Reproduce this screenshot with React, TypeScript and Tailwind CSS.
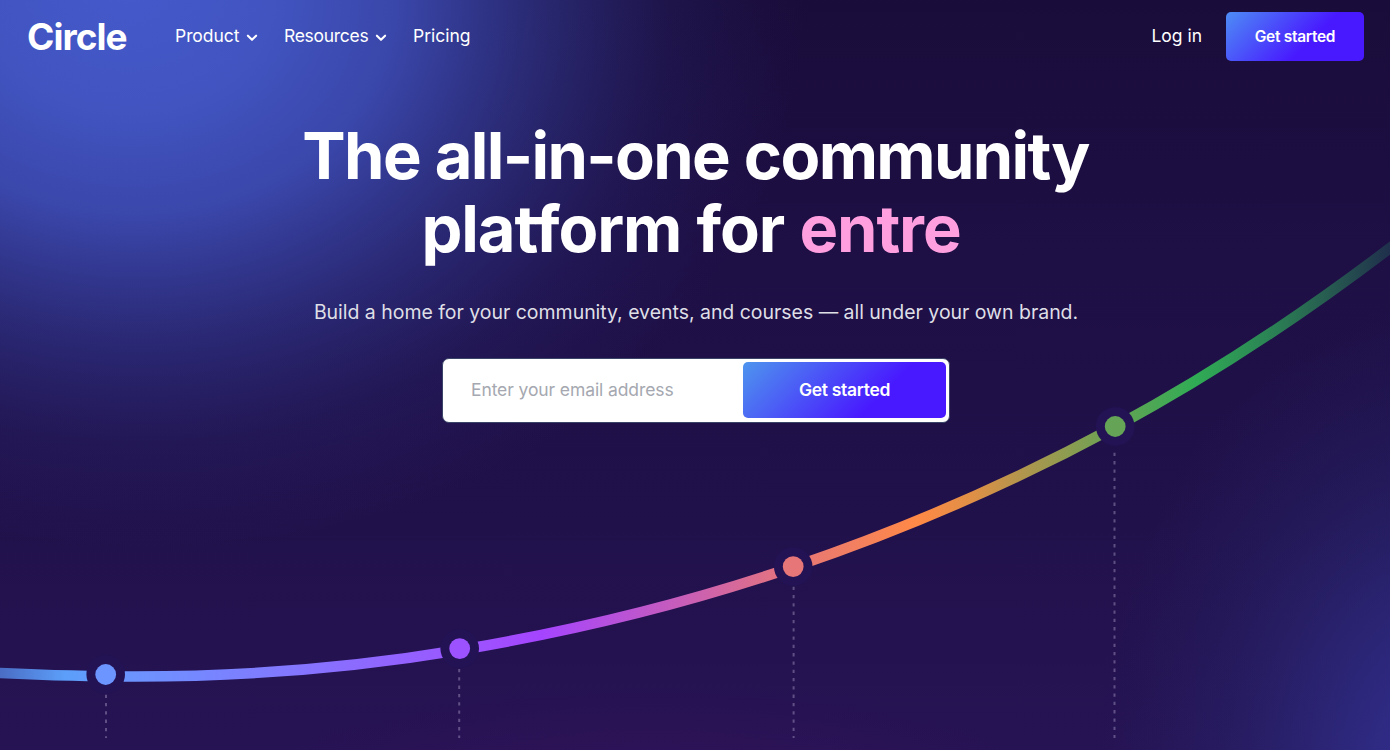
interface Milestone {
  x: number;
  y: number;
  color: string;
  lineX: number;
  lineTop: number;
}

const MILESTONES: Milestone[] = [
  { x: 105.7, y: 674.5, color: "#6c95ff", lineX: 106, lineTop: 694.7 },
  { x: 459.7, y: 648.6, color: "#9c53ff", lineX: 459.2, lineTop: 669 },
  { x: 793.2, y: 566.6, color: "#e77678", lineX: 793.6, lineTop: 586.7 },
  { x: 1115.2, y: 426.5, color: "#65a357", lineX: 1114.5, lineTop: 452.8 },
];

const CURVE =
  "M-10 672.4L0 673C45 675.1 90 676.5 135 676.5C243.3 676.5 351.7 668.1 460 650C571.2 631.4 682.3 604.8 793.5 567C900.7 530.6 1007.8 484.9 1115 427C1206.7 377.5 1298.3 317.7 1390 248L1400 240.4";

function Backdrop() {
  return (
    <svg
      viewBox="0 0 1390 750"
      className="col-start-1 row-start-1 h-[750px] w-[1390px]"
      fill="none"
      aria-hidden="true"
    >
      <defs>
        <linearGradient id="base" x1="0" y1="0" x2="0" y2="1">
          <stop offset="0" stopColor="#1a0c3a" />
          <stop offset="0.35" stopColor="#1e0f45" />
          <stop offset="0.7" stopColor="#21114b" />
          <stop offset="1" stopColor="#261354" />
        </linearGradient>
        <radialGradient id="blue" gradientUnits="userSpaceOnUse" cx="0" cy="0" r="1" gradientTransform="translate(125 -10) rotate(5) scale(680 560)">
          <stop offset="0" stopColor="#4559cb" />
          <stop offset="0.22" stopColor="#4256c4" stopOpacity="0.97" />
          <stop offset="0.4" stopColor="#4052bf" stopOpacity="0.84" />
          <stop offset="0.6" stopColor="#3b4bb4" stopOpacity="0.47" />
          <stop offset="0.8" stopColor="#3340a0" stopOpacity="0.16" />
          <stop offset="1" stopColor="#2c3590" stopOpacity="0" />
        </radialGradient>
        <radialGradient id="corner" gradientUnits="userSpaceOnUse" cx="0" cy="0" r="1" gradientTransform="translate(1450 770) scale(350 470)">
          <stop offset="0" stopColor="#333194" />
          <stop offset="0.3" stopColor="#302f8b" stopOpacity="0.72" />
          <stop offset="0.65" stopColor="#2a2d7c" stopOpacity="0.3" />
          <stop offset="1" stopColor="#262a70" stopOpacity="0" />
        </radialGradient>
        <radialGradient id="plum" gradientUnits="userSpaceOnUse" cx="0" cy="0" r="1" gradientTransform="translate(650 780) scale(380 100)">
          <stop offset="0" stopColor="#38125c" stopOpacity="0.5" />
          <stop offset="1" stopColor="#38125c" stopOpacity="0" />
        </radialGradient>
        <linearGradient id="rainbow" gradientUnits="userSpaceOnUse" x1="0" y1="0" x2="1390" y2="0">
          <stop offset="0" stopColor="#4a6cc4" />
          <stop offset="0.047" stopColor="#5c9ffa" />
          <stop offset="0.09" stopColor="#6b95ff" />
          <stop offset="0.22" stopColor="#8574ff" />
          <stop offset="0.33" stopColor="#9b57ff" />
          <stop offset="0.39" stopColor="#a544ff" />
          <stop offset="0.5" stopColor="#cb60b2" />
          <stop offset="0.57" stopColor="#e67679" />
          <stop offset="0.66" stopColor="#ff8946" />
          <stop offset="0.7" stopColor="#df9046" />
          <stop offset="0.735" stopColor="#b2954d" />
          <stop offset="0.8" stopColor="#68a354" />
          <stop offset="0.86" stopColor="#30ab55" />
          <stop offset="0.91" stopColor="#2b8655" />
          <stop offset="0.96" stopColor="#265750" />
          <stop offset="1" stopColor="#1f2f4c" />
        </linearGradient>
      </defs>

      <rect width="1390" height="750" fill="url(#base)" />
      <rect width="1390" height="750" fill="url(#blue)" />
      <rect width="1390" height="750" fill="url(#corner)" />
      <rect width="1390" height="750" fill="url(#plum)" />

      <path d={CURVE} stroke="url(#rainbow)" strokeWidth="10.6" />

      {MILESTONES.map((m) => (
        <g key={m.x}>
          <path
            d={`M${m.lineX} ${m.lineTop}V738`}
            stroke="#a99cc4"
            strokeOpacity="0.45"
            strokeWidth="2"
            strokeDasharray="3.3 5"
          />
          <circle cx={m.x} cy={m.y} r="19.3" fill="#231355" />
          <circle cx={m.x} cy={m.y} r="10.4" fill={m.color} />
        </g>
      ))}
    </svg>
  );
}

function Chevron() {
  return (
    <svg width="12" height="8" viewBox="0 0 12 8" className="mt-0.5" fill="none" aria-hidden="true">
      <path d="M1.9 1.7L6 5.8L10.1 1.7" stroke="white" strokeWidth="2.1" strokeLinecap="round" strokeLinejoin="round" />
    </svg>
  );
}

function Header() {
  return (
    <header className="flex h-[73px] items-center pr-[26px] pl-[27px] text-[17.5px] text-white">
      <a href="#" className="w-[148px] pb-px text-[37px] leading-none font-bold tracking-[-0.95px]">
        Circle
      </a>
      <nav className="flex items-center">
        <a href="#" className="flex w-[109px] items-center justify-between pr-[26px] tracking-[-0.05px]">
          Product <Chevron />
        </a>
        <a href="#" className="flex w-[129px] items-center justify-between pr-[26px] tracking-[-0.3px]">
          Resources <Chevron />
        </a>
        <a href="#">Pricing</a>
      </nav>
      <div className="ml-auto flex items-center gap-6">
        <a href="#">Log in</a>
        <button className="h-[49px] w-[138px] rounded-[5px] bg-[linear-gradient(135deg,#4d8df5_0%,#4818ff_61%)] text-[15.5px] font-semibold tracking-[-0.3px]">
          Get started
        </button>
      </div>
    </header>
  );
}

export default function App() {
  return (
    <div className="grid h-[750px] w-[1390px] overflow-hidden bg-[#1e0f45] font-['Inter',sans-serif]">
      <Backdrop />
      <div className="z-10 col-start-1 row-start-1 flex flex-col">
        <Header />
        <main className="flex flex-col items-center pt-[46px] pl-0.5">
          <h1 className="flex flex-col items-center text-[65px] leading-[73px] font-bold whitespace-nowrap text-white">
            <span className="pr-px tracking-[-1.65px] [word-spacing:1px]">The all-in-one community</span>
            <span className="pr-[10px] tracking-[-1.1px] [word-spacing:1px]">
              platform for <span className="text-[#ff9fe0]">entre</span>
            </span>
          </h1>
          <p className="mt-8 text-[19.5px] leading-[30px] tracking-[-0.03px] whitespace-nowrap text-[#dfdfe6]">
            Build a home for your community, events, and courses — all under your own brand.
          </p>
          <form
            className="mt-[31px] flex h-[65px] w-[508px] items-start rounded-[7px] border border-[#3a4468] bg-white pt-[3px] pr-[3px] pl-[28px]"
            onSubmit={(e) => e.preventDefault()}
          >
            <input
              type="email"
              placeholder="Enter your email address"
              className="h-[55px] min-w-0 flex-1 text-[17.5px] tracking-[-0.1px] outline-none placeholder:text-[#a5a8b0]"
            />
            <button className="h-14 w-[203px] rounded-[5px] bg-[linear-gradient(135deg,#4e95ee_0%,#4818ff_67%)] text-[17.5px] font-semibold tracking-[-0.3px] text-white">
              Get started
            </button>
          </form>
        </main>
      </div>
    </div>
  );
}
